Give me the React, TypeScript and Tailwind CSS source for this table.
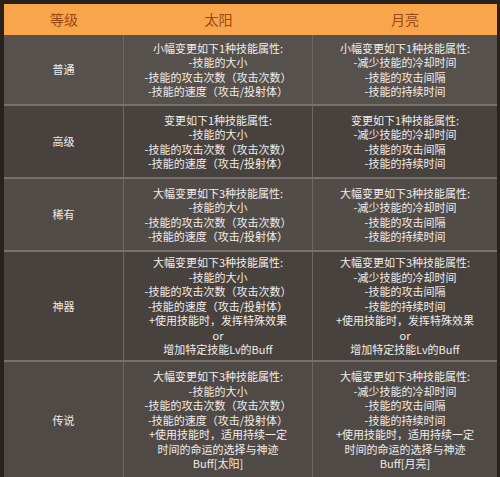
const rows = [
  {
    name: '普通',
    h: 'h-[71px]',
    bg: 'bg-[#56514d]',
    sun: ['小幅变更如下1种技能属性:', '-技能的大小', '-技能的攻击次数（攻击次数）', '-技能的速度（攻击/投射体）'],
    moon: ['小幅变更如下1种技能属性:', '-减少技能的冷却时间', '-技能的攻击间隔', '-技能的持续时间'],
  },
  {
    name: '高级',
    h: 'h-[73px]',
    bg: 'bg-[#48423f]',
    sun: ['变更如下1种技能属性:', '-技能的大小', '-技能的攻击次数（攻击次数）', '-技能的速度（攻击/投射体）'],
    moon: ['变更如下1种技能属性:', '-减少技能的冷却时间', '-技能的攻击间隔', '-技能的持续时间'],
  },
  {
    name: '稀有',
    h: 'h-[73px]',
    bg: 'bg-[#524c49]',
    sun: ['大幅变更如下3种技能属性:', '-技能的大小', '-技能的攻击次数（攻击次数）', '-技能的速度（攻击/投射体）'],
    moon: ['大幅变更如下3种技能属性:', '-减少技能的冷却时间', '-技能的攻击间隔', '-技能的持续时间'],
  },
  {
    name: '神器',
    h: 'h-[110px]',
    bg: 'bg-[#48423f]',
    sun: [
      '大幅变更如下3种技能属性:',
      '-技能的大小',
      '-技能的攻击次数（攻击次数）',
      '-技能的速度（攻击/投射体）',
      '+使用技能时，发挥特殊效果',
      'or',
      '增加特定技能Lv的Buff',
    ],
    moon: [
      '大幅变更如下3种技能属性:',
      '-减少技能的冷却时间',
      '-技能的攻击间隔',
      '-技能的持续时间',
      '+使用技能时，发挥特殊效果',
      'or',
      '增加特定技能Lv的Buff',
    ],
  },
  {
    name: '传说',
    h: 'h-[118px]',
    bg: 'bg-[#504a47]',
    sun: [
      '大幅变更如下3种技能属性:',
      '-技能的大小',
      '-技能的攻击次数（攻击次数）',
      '-技能的速度（攻击/投射体）',
      '+使用技能时，适用持续一定',
      '时间的命运的选择与神迹',
      'Buff[太阳]',
    ],
    moon: [
      '大幅变更如下3种技能属性:',
      '-减少技能的冷却时间',
      '-技能的攻击间隔',
      '-技能的持续时间',
      '+使用技能时，适用持续一定',
      '时间的命运的选择与神迹',
      'Buff[月亮]',
    ],
  },
];

function Lines({ items }: { items: string[] }) {
  return (
    <div className="flex flex-col items-center">
      {items.map((t, i) => (
        <span key={i} className="whitespace-nowrap">{t}</span>
      ))}
    </div>
  );
}

export default function App() {
  return (
    <div className="w-[500px] h-[477px] overflow-hidden bg-[#2a201c] pt-[4px] pl-[4px] pr-[3px]">
      <div
        className="w-[493px] text-[11px] leading-[14.5px] text-[#f1ede9]"
        style={{ fontFamily: '"Microsoft YaHei", "Noto Sans CJK SC", sans-serif' }}
      >
        {/* header */}
        <div className="grid grid-cols-[120px_189px_184px] h-[31px] bg-[#f9a54c] text-[14px] text-[#9a4815]">
          <div className="flex items-center justify-center">等级</div>
          <div className="flex items-center justify-center">太阳</div>
          <div className="flex items-center justify-center">月亮</div>
        </div>

        {rows.map((r) => (
          <div
            key={r.name}
            className={`grid grid-cols-[120px_189px_184px] ${r.h} ${r.bg} border-b-2 border-[#77716c]`}
          >
            <div className="flex items-center justify-center border-r border-[#6e6864]">{r.name}</div>
            <div className="flex items-center justify-center border-r border-[#6e6864] text-center">
              <Lines items={r.sun} />
            </div>
            <div className="flex items-center justify-center text-center">
              <Lines items={r.moon} />
            </div>
          </div>
        ))}
      </div>
    </div>
  );
}
